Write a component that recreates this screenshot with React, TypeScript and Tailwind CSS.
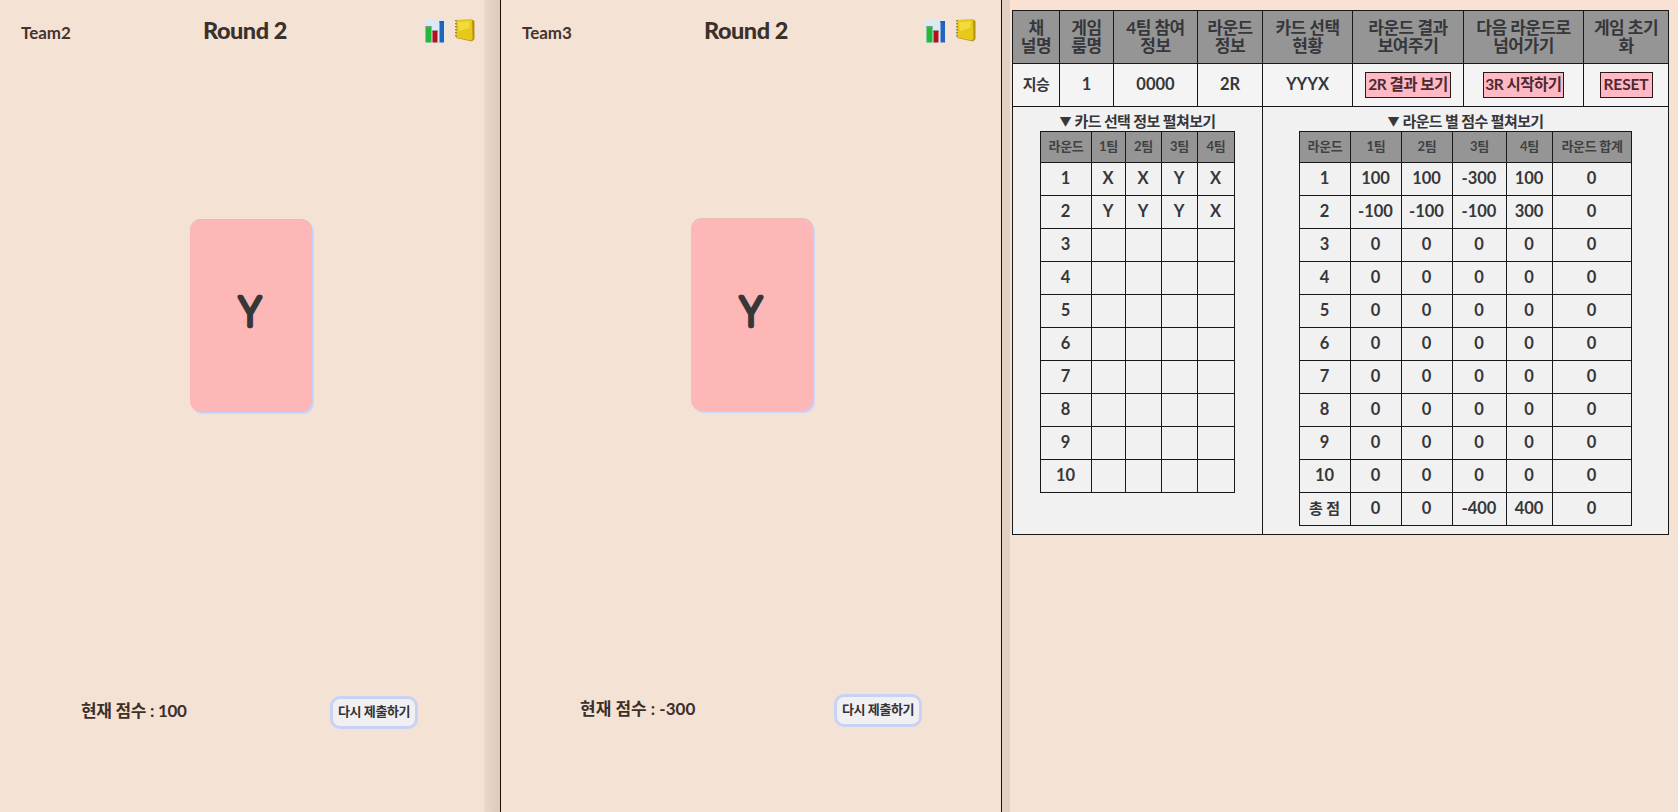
import React from "react";

const FONT = "font-[Lato,'Noto_Sans_CJK_KR',sans-serif]";

function ChartIcon() {
  return (
    <svg width="22" height="26" viewBox="0 0 22 26">
      <rect x="1" y="1" width="20" height="23" fill="#dde9f0" />
      <rect x="1.5" y="8" width="6" height="15.5" fill="#22b83c" />
      <rect x="1.5" y="7" width="6" height="2" fill="#6f9a78" />
      <rect x="8.5" y="12" width="5" height="11.5" fill="#b3121c" />
      <rect x="8.5" y="11.5" width="5" height="1.5" fill="#5f3a42" />
      <rect x="15.5" y="2" width="4.5" height="21.5" fill="#2264bd" />
      <rect x="15.5" y="2" width="4.5" height="1.5" fill="#35588e" />
    </svg>
  );
}

function LedgerIcon() {
  return (
    <svg width="22" height="26" viewBox="0 0 22 26">
      <path d="M2 1 L18 0.5 L20.5 2 L20.5 20 L18 22.5 L2 19 Z" fill="#b59414" />
      <path d="M2 1 L18 0.5 L18.5 19.5 L17 21.5 L2 18.5 Z" fill="#e6c91b" />
      <path d="M4 3 L16 2.5 L15 9 L5 12 Z" fill="#f2dc3c" />
      <path d="M2 1 V19" stroke="#99885a" strokeWidth="2" strokeDasharray="1.4 1.6" />
    </svg>
  );
}

type PlayerProps = { team: string; score: string; variant: "a" | "b" };

function PlayerPanel({ team, score, variant }: PlayerProps) {
  const a = variant === "a";
  return (
    <section className="flex h-[812px] w-[501px] shrink-0 border-r border-[#17100b] bg-[#f4e3d5]">
      <div className={a ? "flex w-[484px] flex-col" : "flex w-[500px] flex-col"}>
        <header className="flex h-[60px] items-center pl-[21px]">
          <div className="w-[182px] pt-[6px] text-[17px] font-bold text-[#46342e]">{team}</div>
          <h1 className="w-[221px] pt-[2px] text-[23.5px] font-black tracking-[-0.5px] text-[#3b302c]">Round 2</h1>
          <div className="flex gap-[8px] pt-[3px]">
            <ChartIcon />
            <LedgerIcon />
          </div>
        </header>
        <div className={a ? "pt-[159px] pl-[190px]" : "pt-[158px] pl-[190px]"}>
          <div className="flex h-[193px] w-[122px] items-center justify-center rounded-[11px] border-t border-[#e5bdb5] bg-[#fdb7b7] shadow-[1px_1px_0_0_#c4d1fb,2px_2px_0_0_#ccd7f9]">
            <svg width="60" height="60" viewBox="0 0 60 60">
              <text
                x="29"
                y={a ? 39.5 : 40.5}
                textAnchor="middle"
                className="fill-[#383737] stroke-[#383737] stroke-[4.5px] text-[42px] font-light"
                strokeLinejoin="round"
                textLength="22"
                lengthAdjust="spacingAndGlyphs"
              >
                Y
              </text>
            </svg>
          </div>
        </div>
        <div className={`flex items-center ${a ? "pt-[284px] pl-[81px]" : "pt-[283px] pl-[79px]"}`}>
          <div
            className={`pb-[3px] text-[17px] font-bold whitespace-nowrap text-[#3d302b] ${
              a ? "w-[249px] tracking-[-0.3px]" : "w-[254px]"
            }`}
          >
            현재 점수 : {score}
          </div>
          <button className="h-[33px] w-[88px] rounded-[10px] border-3 border-[#c8d2f5] bg-[#f0f0f2] pb-[3px] text-[13px] leading-none font-bold tracking-[-0.4px] whitespace-nowrap text-[#353334]">
            다시 제출하기
          </button>
        </div>
      </div>
      {a && <div className="w-[16px] bg-linear-to-r from-[#ead9cc] to-[#dccbbd]" />}
    </section>
  );
}

const HEADERS: string[][] = [
  ["채", "널명"],
  ["게임", "룸명"],
  ["4팀 참여", "정보"],
  ["라운드", "정보"],
  ["카드 선택", "현황"],
  ["라운드 결과", "보여주기"],
  ["다음 라운드로", "넘어가기"],
  ["게임 초기", "화"],
];

const PICKS: string[][] = [
  ["X", "X", "Y", "X"],
  ["Y", "Y", "Y", "X"],
];

const SCORES: string[][] = [
  ["100", "100", "-300", "100", "0"],
  ["-100", "-100", "-100", "300", "0"],
];

const ROUNDS = Array.from({ length: 10 }, (_, i) => i);
const CELL = "border-r border-b border-[#16181a] text-center align-middle";
const TABLE = "table-fixed border-separate border-spacing-0 border-t border-l border-[#16181a]";
const BTN =
  "block mx-auto h-[26px] border border-[#2b181b] bg-[#ffb9c4] leading-none font-bold whitespace-nowrap text-[#4c2a33]";

function Columns({ widths }: { widths: number[] }) {
  return (
    <colgroup>
      {widths.map((w, i) => (
        <col key={i} style={{ width: w }} />
      ))}
    </colgroup>
  );
}

function SubTable({ widths, head, rows }: { widths: number[]; head: string[]; rows: string[][] }) {
  const total = widths.reduce((s, w) => s + w, 1);
  return (
    <table className={`${TABLE} mx-auto`} style={{ width: total }}>
      <Columns widths={widths} />
      <thead>
        <tr className="h-[31px] bg-[#959595] text-[13px] tracking-[-0.3px] text-[#3f4143]">
          {head.map((h) => (
            <th key={h} className={`${CELL} p-0 pb-[2px] leading-none font-bold whitespace-nowrap`}>
              {h}
            </th>
          ))}
        </tr>
      </thead>
      <tbody>
        {rows.map((r) => (
          <tr key={r[0]} className="h-[33px] text-[16.5px] leading-none">
            {r.map((v, i) => (
              <td key={i} className={`${CELL} p-0 pr-px pb-[1px] font-bold whitespace-nowrap`}>
                {v === "총 점" ? <span className="text-[15px]">{v}</span> : v}
              </td>
            ))}
          </tr>
        ))}
      </tbody>
    </table>
  );
}

function Caption({ children }: { children: string }) {
  return (
    <div className="flex h-[24px] items-end justify-center gap-[3px] text-[15px] leading-[19px] font-bold">
      <span className="text-[12px]">▼</span>
      <span className="tracking-[-0.6px]">{children}</span>
    </div>
  );
}

function AdminPanel() {
  const pickRows = ROUNDS.map((i) => [String(i + 1), ...(PICKS[i] ?? ["", "", "", ""])]);
  const scoreRows = ROUNDS.map((i) => [String(i + 1), ...(SCORES[i] ?? ["0", "0", "0", "0", "0"])]);
  scoreRows.push(["총 점", "0", "0", "-400", "400", "0"]);
  const value = `${CELL} p-0 pb-[1px]`;
  return (
    <section className="flex h-[812px] grow bg-[#f4e3d5]">
      <div className="w-[8px] bg-[#e2d1c3]" />
      <div className="grow bg-linear-to-b from-[#fbe1d4] from-[10px] to-[#f4e3d5] to-[12px] pt-[10px] pl-[2px]">
        <table className={`${TABLE} w-[657px] bg-[#f1f1f1] text-[#36373a]`}>
          <Columns widths={[47, 54, 84, 65, 90, 111, 120, 85]} />
          <thead>
            <tr className="h-[53px] bg-[#959595] text-[17px] leading-[18px] tracking-[-0.5px]">
              {HEADERS.map((h) => (
                <th key={h[0]} className={`${CELL} p-0 pb-[1px] font-bold whitespace-nowrap`}>
                  {h[0]}
                  <br />
                  {h[1]}
                </th>
              ))}
            </tr>
          </thead>
          <tbody>
            <tr className="h-[43px] bg-[#f4f4f4] text-[16.5px] leading-none font-bold">
              <td className={value}>
                <span className="text-[15px] tracking-[-0.5px]">지승</span>
              </td>
              <td className={value}>1</td>
              <td className={value}>0000</td>
              <td className={value}>2R</td>
              <td className={value}>YYYX</td>
              <td className={value}>
                <button className={`${BTN} w-[86px] text-[15.5px] tracking-[-0.5px]`}>2R 결과 보기</button>
              </td>
              <td className={value}>
                <button className={`${BTN} w-[81px] text-[15.5px] tracking-[-0.5px]`}>3R 시작하기</button>
              </td>
              <td className={value}>
                <button className={`${BTN} w-[53px] text-[15.5px] tracking-[-0.1px]`}>RESET</button>
              </td>
            </tr>
            <tr className="h-[428px]">
              <td colSpan={4} className="border-r border-b border-[#16181a] p-0 align-top">
                <Caption>카드 선택 정보 펼쳐보기</Caption>
                <SubTable
                  widths={[51, 34, 36, 36, 37]}
                  head={["라운드", "1팀", "2팀", "3팀", "4팀"]}
                  rows={pickRows}
                />
              </td>
              <td colSpan={4} className="border-r border-b border-[#16181a] p-0 align-top">
                <Caption>라운드 별 점수 펼쳐보기</Caption>
                <SubTable
                  widths={[51, 51, 51, 54, 46, 79]}
                  head={["라운드", "1팀", "2팀", "3팀", "4팀", "라운드 합계"]}
                  rows={scoreRows}
                />
              </td>
            </tr>
          </tbody>
        </table>
      </div>
    </section>
  );
}

export default function App() {
  return (
    <main className={`flex h-[812px] w-[1678px] overflow-hidden ${FONT}`}>
      <PlayerPanel team="Team2" score="100" variant="a" />
      <PlayerPanel team="Team3" score="-300" variant="b" />
      <AdminPanel />
    </main>
  );
}
